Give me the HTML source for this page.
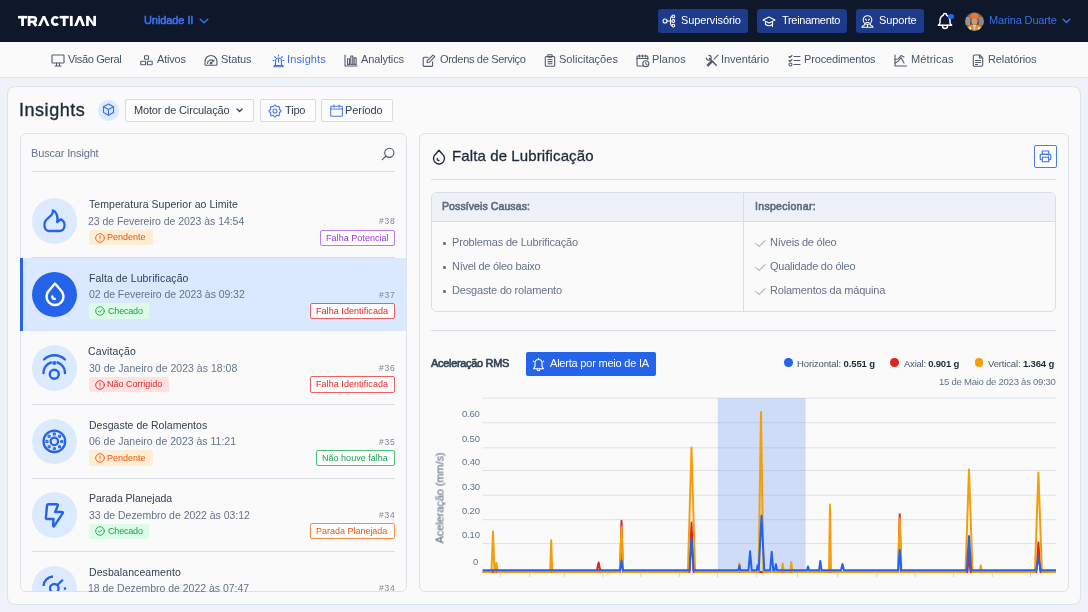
<!DOCTYPE html>
<html><head><meta charset="utf-8">
<style>
*{box-sizing:border-box;margin:0;padding:0}
html,body{width:1088px;height:612px;overflow:hidden;background:#eff3f9;font-family:"Liberation Sans",sans-serif;color:#334155;position:relative}
.a{position:absolute}
.t{position:absolute;white-space:nowrap;will-change:transform}
.t b{font-weight:bold;color:#1e293b}
svg{position:absolute;overflow:visible}

</style></head><body>
<div class="a" style="left:0px;top:0px;width:1088px;height:42px;background:#0f172a"></div>
<div class="a" style="left:0px;top:42px;width:1088px;height:36px;background:#fafafa;border-bottom:1px solid #e1e6ed"></div>
<div class="a" style="left:658px;top:9px;width:90px;height:24px;background:#1e3a8a;border-radius:3px"></div>
<div class="a" style="left:757px;top:9px;width:90px;height:24px;background:#1e3a8a;border-radius:3px"></div>
<div class="a" style="left:856px;top:9px;width:68px;height:24px;background:#1e3a8a;border-radius:3px"></div>
<div class="a" style="left:7px;top:86px;width:1074px;height:519px;background:#fafafa;border:1px solid #dde3ec;border-radius:8px"></div>
<div class="a" style="left:98px;top:100px;width:21px;height:21px;border-radius:50%;background:#dbeafe"></div>
<div class="a" style="left:125px;top:99px;width:129px;height:23px;border:1px solid #d5dce6;background:#fdfdfd;border-radius:2px"></div>
<div class="a" style="left:260px;top:99px;width:56px;height:23px;border:1px solid #d5dce6;background:#fdfdfd;border-radius:2px"></div>
<div class="a" style="left:321px;top:99px;width:72px;height:23px;border:1px solid #d5dce6;background:#fdfdfd;border-radius:2px"></div>
<div class="a" style="left:20px;top:133px;width:387px;height:459px;background:#fafafa;border:1px solid #dde3ec;border-radius:6px"></div>
<div class="a" style="left:32px;top:171px;width:363px;height:1px;background:#d8dee8"></div>
<div class="a" style="left:21px;top:258px;width:385px;height:73px;background:#dbe9fe"></div>
<div class="a" style="left:20px;top:258px;width:3px;height:73px;background:#2563eb"></div>
<div class="a" style="left:32px;top:257px;width:363px;height:1px;background:#d8dee8"></div>
<div class="a" style="left:32px;top:404px;width:363px;height:1px;background:#d8dee8"></div>
<div class="a" style="left:32px;top:477.5px;width:363px;height:1px;background:#d8dee8"></div>
<div class="a" style="left:32px;top:551px;width:363px;height:1px;background:#d8dee8"></div>
<div class="a" style="left:31.7px;top:198.4px;width:45.5px;height:45.5px;border-radius:50%;background:#dbeafe"></div>
<div class="a" style="left:89px;top:229.8px;width:64px;height:15.5px;border-radius:2px;background:#ffedd5"></div>
<div class="a" style="left:320px;top:229.5px;width:74.8px;height:16.2px;border-radius:2px;border:1px solid #b57cf5;background:#fff"></div>
<div class="a" style="left:31.7px;top:271.85px;width:45.5px;height:45.5px;border-radius:50%;background:#2563eb"></div>
<div class="a" style="left:89px;top:303.25px;width:60px;height:15.5px;border-radius:2px;background:#dcfce7"></div>
<div class="a" style="left:310.4px;top:302.95px;width:84.4px;height:16.2px;border-radius:2px;border:1px solid #ee6161;background:#fff"></div>
<div class="a" style="left:31.7px;top:345.3px;width:45.5px;height:45.5px;border-radius:50%;background:#dbeafe"></div>
<div class="a" style="left:89px;top:376.7px;width:80px;height:15.5px;border-radius:2px;background:#fee2e2"></div>
<div class="a" style="left:310.4px;top:376.4px;width:84.4px;height:16.2px;border-radius:2px;border:1px solid #ee6161;background:#fff"></div>
<div class="a" style="left:31.7px;top:418.75px;width:45.5px;height:45.5px;border-radius:50%;background:#dbeafe"></div>
<div class="a" style="left:89px;top:450.15px;width:64px;height:15.5px;border-radius:2px;background:#ffedd5"></div>
<div class="a" style="left:316.3px;top:449.85px;width:78.5px;height:16.2px;border-radius:2px;border:1px solid #4cc274;background:#fff"></div>
<div class="a" style="left:31.7px;top:492.2px;width:45.5px;height:45.5px;border-radius:50%;background:#dbeafe"></div>
<div class="a" style="left:89px;top:523.6px;width:60px;height:15.5px;border-radius:2px;background:#dcfce7"></div>
<div class="a" style="left:310.4px;top:523.3px;width:84.4px;height:16.2px;border-radius:2px;border:1px solid #f58c4a;background:#fff"></div>
<div class="a" style="left:20px;top:560px;width:387px;height:31px;overflow:hidden"><div class="a" style="left:11.7px;top:5.65px;width:45.5px;height:45.5px;border-radius:50%;background:#dbeafe"></div></div>
<div class="a" style="left:419px;top:133px;width:650px;height:459px;background:#fafafa;border:1px solid #dde3ec;border-radius:6px"></div>
<div class="a" style="left:1033.5px;top:145px;width:23px;height:23px;border:1px solid #4a7cec;border-radius:2px;background:#fff"></div>
<div class="a" style="left:431px;top:179px;width:625px;height:1px;background:#d8dee8"></div>
<div class="a" style="left:431px;top:192px;width:625px;height:120px;border:1px solid #d8dee8;border-radius:6px;overflow:hidden"><div class="a" style="left:0;top:0;width:623px;height:29px;background:#eef2f8;border-bottom:1px solid #d8dee8"></div><div class="a" style="left:311px;top:0;width:1px;height:120px;background:#d8dee8"></div></div>
<div class="a" style="left:431px;top:329.5px;width:625px;height:1px;background:#d8dee8"></div>
<div class="a" style="left:526px;top:351.5px;width:130px;height:24px;background:#2563eb;border-radius:2px"></div>
<div class="a" style="left:784px;top:358.2px;width:8.6px;height:8.6px;border-radius:50%;background:#2563eb"></div>
<div class="a" style="left:890.3px;top:358.2px;width:8.6px;height:8.6px;border-radius:50%;background:#dc2626"></div>
<div class="a" style="left:974.7px;top:358.2px;width:8.6px;height:8.6px;border-radius:50%;background:#f59e0b"></div><svg class="chart" width="1088" height="612" style="left:0;top:0" viewBox="0 0 1088 612">
<rect x="717.8" y="398.2" width="87.8" height="173" fill="#cfdcf7"/>
<line x1="482.6" y1="398.2" x2="1056" y2="398.2" stroke="#94a3b8" stroke-opacity="0.28" stroke-width="1"/>
<line x1="482.6" y1="422.7" x2="1056" y2="422.7" stroke="#94a3b8" stroke-opacity="0.28" stroke-width="1"/>
<line x1="482.6" y1="447.8" x2="1056" y2="447.8" stroke="#94a3b8" stroke-opacity="0.28" stroke-width="1"/>
<line x1="482.6" y1="470.5" x2="1056" y2="470.5" stroke="#94a3b8" stroke-opacity="0.28" stroke-width="1"/>
<line x1="482.6" y1="495.2" x2="1056" y2="495.2" stroke="#94a3b8" stroke-opacity="0.28" stroke-width="1"/>
<line x1="482.6" y1="519.7" x2="1056" y2="519.7" stroke="#94a3b8" stroke-opacity="0.28" stroke-width="1"/>
<line x1="482.6" y1="543.6" x2="1056" y2="543.6" stroke="#94a3b8" stroke-opacity="0.28" stroke-width="1"/>
<line x1="500.3" y1="571.5" x2="500.3" y2="577" stroke="#cbd5e1" stroke-width="1"/>
<line x1="529.7" y1="571.5" x2="529.7" y2="577" stroke="#cbd5e1" stroke-width="1"/>
<line x1="564.3" y1="571.5" x2="564.3" y2="577" stroke="#cbd5e1" stroke-width="1"/>
<line x1="602.9" y1="571.5" x2="602.9" y2="577" stroke="#cbd5e1" stroke-width="1"/>
<line x1="641" y1="571.5" x2="641" y2="577" stroke="#cbd5e1" stroke-width="1"/>
<line x1="679.3" y1="571.5" x2="679.3" y2="577" stroke="#cbd5e1" stroke-width="1"/>
<line x1="717.4" y1="571.5" x2="717.4" y2="577" stroke="#cbd5e1" stroke-width="1"/>
<line x1="757" y1="571.5" x2="757" y2="577" stroke="#cbd5e1" stroke-width="1"/>
<line x1="797.5" y1="571.5" x2="797.5" y2="577" stroke="#cbd5e1" stroke-width="1"/>
<line x1="837.6" y1="571.5" x2="837.6" y2="577" stroke="#cbd5e1" stroke-width="1"/>
<line x1="876.8" y1="571.5" x2="876.8" y2="577" stroke="#cbd5e1" stroke-width="1"/>
<line x1="915" y1="571.5" x2="915" y2="577" stroke="#cbd5e1" stroke-width="1"/>
<line x1="953.3" y1="571.5" x2="953.3" y2="577" stroke="#cbd5e1" stroke-width="1"/>
<line x1="992.3" y1="571.5" x2="992.3" y2="577" stroke="#cbd5e1" stroke-width="1"/>
<line x1="1030.5" y1="571.5" x2="1030.5" y2="577" stroke="#cbd5e1" stroke-width="1"/>
<path d="M482.6 572.0 L596.6 572.0 L598.6 562.5 L600.6 572.0 L620.1 572.0 L621.5 520.7 L622.9 572.0 L689.5 572.0 L691.5 522.6 L693.5 572.0 L898.3 572.0 L899.7 514.2 L901.1 572.0 L967.5 572.0 L969.0 553.0 L970.5 572.0 L1036.4 572.0 L1038.4 542.6 L1040.4 572.0 L1056.0 572.0" fill="none" stroke="#dc2626" stroke-width="2" stroke-linejoin="round"/>
<path d="M482.6 572.0 L491.5 572.0 L493.0 531.5 L494.5 572.0 L495.3 572.0 L496.5 563.0 L497.7 572.0 L550.2 572.0 L551.2 540.3 L552.2 572.0 L619.7 572.0 L621.5 527.0 L623.3 572.0 L687.9 572.0 L691.5 447.6 L695.1 572.0 L738.4 572.0 L739.4 563.6 L740.4 572.0 L758.6 572.0 L761.0 411.9 L763.4 572.0 L781.7 572.0 L782.7 563.6 L783.7 572.0 L790.3 572.0 L791.3 562.0 L792.3 572.0 L829.0 572.0 L830.0 504.4 L831.0 572.0 L897.9 572.0 L899.7 518.4 L901.5 572.0 L965.5 572.0 L969.0 469.4 L972.5 572.0 L980.0 572.0 L980.8 565.5 L981.6 572.0 L1034.9 572.0 L1038.4 472.4 L1041.9 572.0 L1056.0 572.0" fill="none" stroke="#f59e0b" stroke-width="2" stroke-linejoin="round"/>
<path d="M482.6 570.3 L620.0 570.3 L621.5 560.6 L623.0 570.3 L689.6 570.3 L691.6 537.4 L693.6 570.3 L738.4 570.3 L739.4 565.5 L740.4 570.3 L748.5 570.3 L750.1 551.3 L751.7 570.3 L756.7 570.3 L757.7 565.3 L758.7 570.3 L758.7 570.3 L761.5 515.8 L764.3 570.3 L770.1 570.3 L771.7 551.8 L773.3 570.3 L774.7 570.3 L775.9 564.3 L777.1 570.3 L807.0 570.3 L808.0 566.5 L809.0 570.3 L819.1 570.3 L820.3 561.0 L821.5 570.3 L841.0 570.3 L842.5 564.0 L844.0 570.3 L898.2 570.3 L899.7 550.0 L901.2 570.3 L966.8 570.3 L969.0 536.0 L971.2 570.3 L1036.2 570.3 L1038.4 557.3 L1040.6 570.3 L1056.0 570.3" fill="none" stroke="#2563eb" stroke-width="2" stroke-linejoin="round"/>
</svg><svg style="left:0;top:0" width="100" height="40" viewBox="0 0 100 40"><g fill="#fff"><rect x="18" y="15.9" width="9.1" height="2.6"/><rect x="21.15" y="15.9" width="2.8" height="10.1"/><rect x="27.7" y="15.9" width="2.8" height="10.1"/><path d="M38 26 L42.6 15.9 H45.1 L49.6 26 H46.8 L43.85 19.3 L40.9 26 Z"/><rect x="59.6" y="15.9" width="9.2" height="2.6"/><rect x="62.8" y="15.9" width="2.8" height="10.1"/><rect x="69.9" y="15.9" width="2.8" height="10.1"/><path d="M74.1 26 L78.3 15.9 H81.2 L85.1 26 H82.2 L79.75 19.6 L77 26 Z"/><rect x="86.1" y="15.9" width="2.7" height="10.1"/><rect x="93.3" y="15.9" width="2.7" height="10.1"/><path d="M86.1 15.9 H88.9 L96 26 H93.2 Z"/></g><g fill="none" stroke="#fff"><path d="M29 17.2 H33.6 A2.3 2.3 0 0 1 33.6 21.8 H29" stroke-width="2.6"/><path d="M33.2 21.6 L36.2 26" stroke-width="2.9"/><path d="M57.9 18.4 A3.35 3.7 0 1 0 57.9 23.5" stroke-width="2.7"/></g></svg>
<svg style="left:198.5px;top:18px" width="10" height="6" viewBox="0 0 10 6" fill="none" stroke="#3b70e8" stroke-width="1.5" stroke-linecap="round" stroke-linejoin="round"><path d="M1.2 1.2l3.8 3.6l3.8 -3.6"/></svg>
<svg style="left:1062px;top:18px" width="9" height="6" viewBox="0 0 9 6" fill="none" stroke="#3b70e8" stroke-width="1.4" stroke-linecap="round" stroke-linejoin="round"><path d="M1.2 1.2l3.3 3.3l3.3 -3.3"/></svg>
<svg style="left:662px;top:14px" width="14" height="14" viewBox="0 0 14 14" fill="none" stroke="#ffffff" stroke-width="1.1" stroke-linecap="round" stroke-linejoin="round"><circle cx="3" cy="7" r="2"/><path d="M5 7h4"/><path d="M10 2.5q-1.5 0 -1.5 2v5q0 2 1.5 2"/><circle cx="11.3" cy="2.4" r="1.4"/><circle cx="11.3" cy="7" r="1.4"/><circle cx="11.3" cy="11.6" r="1.4"/></svg>
<svg style="left:762px;top:14.5px" width="14" height="13" viewBox="0 0 14 13" fill="none" stroke="#ffffff" stroke-width="1.1" stroke-linecap="round" stroke-linejoin="round"><path d="M7 2l6 3l-6 3l-6 -3z"/><path d="M3.5 6.5v3q3.5 2.5 7 0v-3"/><path d="M10.5 6.5v5"/></svg>
<svg style="left:861px;top:14.5px" width="13" height="13" viewBox="0 0 13 13" fill="none" stroke="#ffffff" stroke-width="1.1" stroke-linecap="round" stroke-linejoin="round"><circle cx="6.5" cy="5" r="4.3"/><path d="M4.5 4.2l1 1m3 -1l-1 1"/><path d="M5 7.5h3"/><path d="M4 9.2l-1 1.3q-2 .5 -2 1.7h11q0 -1.2 -2 -1.7l-1 -1.3"/><path d="M6.5 9.5v2.5"/></svg>
<svg style="left:934.5px;top:11px" width="20" height="20" viewBox="0 0 24 24" fill="none" stroke="#ffffff" stroke-width="1.7" stroke-linecap="round" stroke-linejoin="round"><path d="M10 5a2 2 0 1 1 4 0a7 7 0 0 1 4 6v3a4 4 0 0 0 2 3h-16a4 4 0 0 0 2 -3v-3a7 7 0 0 1 4 -6"/><path d="M9 17v1a3 3 0 0 0 6 0v-1"/></svg>
<div class="a" style="left:948.4px;top:13.7px;width:5.2px;height:5.2px;border-radius:50%;background:#2563eb"></div>
<svg style="left:965px;top:11.5px" width="19" height="19" viewBox="0 0 19 19"><defs><clipPath id="avc"><circle cx="9.5" cy="9.5" r="9.3"/></clipPath></defs><g clip-path="url(#avc)">
<rect width="19" height="19" fill="#6f6a62"/><rect x="0" y="5" width="5" height="8" fill="#9a958c"/><rect x="14" y="5" width="5" height="8" fill="#8d8a84"/>
<path d="M5 6q0 -5 4.5 -5q4.5 0 4.5 5z" fill="#f0782a"/><rect x="4" y="5.2" width="11" height="1.4" fill="#e8691f"/>
<ellipse cx="9.5" cy="9.3" rx="3" ry="3.4" fill="#c79a7c"/><path d="M6 8q-1.5 3 -0.5 6l1.5 -1z" fill="#6a4a35"/><path d="M13 8q1.5 3 0.5 6l-1.5 -1z" fill="#6a4a35"/>
<path d="M2 19l1 -5q3 -2 6.5 -1q3.5 -1 6.5 1l1 5z" fill="#f08a1c"/><path d="M8 13l1.5 6l1.5 -6z" fill="#c9cdd2"/><rect x="4" y="15" width="2" height="4" fill="#d9dde0"/><rect x="13" y="15" width="2" height="4" fill="#d9dde0"/>
</g></svg>
<svg style="left:50.5px;top:53.5px" width="14" height="13" viewBox="0 0 14 13" fill="none" stroke="#505c6e" stroke-width="1.1" stroke-linecap="round" stroke-linejoin="round"><rect x="1" y="1" width="12" height="8" rx="0.8"/><path d="M4 12h6M5.5 9v3M8.5 9v3"/></svg>
<svg style="left:139.5px;top:55px" width="13" height="10.5" viewBox="0 0 13 10.5" fill="none" stroke="#505c6e" stroke-width="1.1" stroke-linecap="round" stroke-linejoin="round"><rect x="4.5" y="0.8" width="4" height="3.5" rx="0.6"/><rect x="0.8" y="6.3" width="4.8" height="3.5" rx="0.6"/><rect x="7.4" y="6.3" width="4.8" height="3.5" rx="0.6"/></svg>
<svg style="left:204px;top:55px" width="14" height="11" viewBox="0 0 14 11" fill="none" stroke="#505c6e" stroke-width="1.1" stroke-linecap="round" stroke-linejoin="round"><path d="M1 9.5v-3a6 6 0 0 1 12 0v3q0 0.8 -0.8 0.8h-10.4q-0.8 0 -0.8 -0.8z"/><path d="M3.5 8.5a3.5 3.5 0 0 1 6 -2.5"/><circle cx="7" cy="8.2" r="0.8" fill="#505c6e"/><path d="M7 8.2l3.3 -3"/></svg>
<svg style="left:271.5px;top:53.5px" width="13" height="13" viewBox="0 0 13 13" fill="none" stroke="#3b70e8" stroke-width="1.1" stroke-linecap="round" stroke-linejoin="round"><path d="M3.5 11.5v-4.5a3 3 0 0 1 6 0v4.5"/><path d="M2 11.5h9v1.2h-9z"/><path d="M6.5 1v1M1 6.5h1M11 6.5h1M2.7 2.7l.8 .8M10.3 2.7l-.8 .8"/><path d="M6.5 5.5v2.5"/></svg>
<svg style="left:343.5px;top:53.5px" width="14" height="13" viewBox="0 0 14 13" fill="none" stroke="#505c6e" stroke-width="1.1" stroke-linecap="round" stroke-linejoin="round"><path d="M1 1v11h12"/><rect x="3.5" y="4.8" width="2" height="5.6"/><rect x="6.8" y="2" width="2" height="8.4"/><rect x="10.1" y="3.8" width="2" height="6.6"/></svg>
<svg style="left:422px;top:53.5px" width="14" height="13" viewBox="0 0 14 13" fill="none" stroke="#505c6e" stroke-width="1.1" stroke-linecap="round" stroke-linejoin="round"><path d="M6 3.2h-3.6a1.2 1.2 0 0 0 -1.2 1.2v6.8a1.2 1.2 0 0 0 1.2 1.2h7a1.2 1.2 0 0 0 1.2 -1.2v-3.4"/><path d="M5 8.5l0.4 -2l5.6 -5.4l1.8 1.6l-5.6 5.6z"/></svg>
<svg style="left:544px;top:53.5px" width="12" height="13" viewBox="0 0 12 13" fill="none" stroke="#505c6e" stroke-width="1.1" stroke-linecap="round" stroke-linejoin="round"><rect x="1.3" y="2.5" width="9.4" height="9.8" rx="1"/><rect x="3.8" y="0.8" width="4.4" height="2.5" rx="0.6"/><path d="M4 5.5h4M4 7.6h4M4 9.7h4"/></svg>
<svg style="left:636px;top:53.5px" width="14" height="14" viewBox="0 0 14 14" fill="none" stroke="#505c6e" stroke-width="1.1" stroke-linecap="round" stroke-linejoin="round"><path d="M7 12h-5.2a0.8 0.8 0 0 1 -0.8 -0.8v-8.4a0.8 0.8 0 0 1 0.8 -0.8h9.2a0.8 0.8 0 0 1 0.8 .8v2.8"/><path d="M1 4.5h11"/><path d="M3.5 1v2M6.5 1v2M9.5 1v2"/><circle cx="9.8" cy="9.8" r="3"/><path d="M9.8 8.5v1.3l1 .8"/></svg>
<svg style="left:704.5px;top:53.5px" width="14" height="13" viewBox="0 0 14 13" fill="none" stroke="#505c6e" stroke-width="1.1" stroke-linecap="round" stroke-linejoin="round"><path d="M1.4 3.9 A2.4 2.4 0 1 0 3.9 1.4"/><path d="M4.6 4.6 L11.3 11.3" stroke-width="1.5"/><path d="M13 1.2 L9 5.2"/><path d="M7.3 6.9 L2.3 11.9" stroke-width="2.6" stroke-linecap="butt"/></svg>
<svg style="left:787.5px;top:53.5px" width="13" height="13" viewBox="0 0 13 13" fill="none" stroke="#505c6e" stroke-width="1.1" stroke-linecap="round" stroke-linejoin="round"><path d="M1 2.5l1 1l2 -2M1 6.5l1 1l2 -2"/><circle cx="2.5" cy="10.5" r="1.5"/><path d="M6 2.5h6M6 6.5h6M6 10.5h6"/></svg>
<svg style="left:894px;top:53.5px" width="13" height="13" viewBox="0 0 13 13" fill="none" stroke="#505c6e" stroke-width="1.1" stroke-linecap="round" stroke-linejoin="round"><path d="M1 1v11h11.5"/><path d="M1 9l3 -1.5l3 -4l3 5.5"/><path d="M1 5.5l3 -0.5l3 -3.5l3 1.5"/></svg>
<svg style="left:971.5px;top:53.5px" width="12" height="13" viewBox="0 0 12 13" fill="none" stroke="#505c6e" stroke-width="1.1" stroke-linecap="round" stroke-linejoin="round"><path d="M7.5 1v3h3"/><path d="M9.5 12.2h-7a1.2 1.2 0 0 1 -1.2 -1.2v-8.8a1.2 1.2 0 0 1 1.2 -1.2h5.2l3 3v7a1.2 1.2 0 0 1 -1.2 1.2z"/><path d="M3.5 6.5h5M3.5 8.5h5M3.5 10.5h2"/></svg>
<svg style="left:102px;top:103px" width="13" height="13" viewBox="0 0 13 13" fill="none" stroke="#3b70e8" stroke-width="1.1" stroke-linecap="round" stroke-linejoin="round"><path d="M6.5 1l5 2.8v5.6l-5 2.8l-5 -2.8v-5.6z"/><path d="M1.5 3.8l5 2.8l5 -2.8M6.5 6.6v5.6"/></svg>
<svg style="left:235.5px;top:107.8px" width="7.5" height="5" viewBox="0 0 7.5 5" fill="none" stroke="#334155" stroke-width="1.2" stroke-linecap="round" stroke-linejoin="round"><path d="M1 1l2.6 2.5l2.6 -2.5"/></svg>
<svg style="left:267.4px;top:102.85px" width="16" height="16" viewBox="0 0 24 24" fill="none" stroke="#4a7cec" stroke-width="1.7" stroke-linecap="round" stroke-linejoin="round"><path d="M10.325 4.317c.426 -1.756 2.924 -1.756 3.35 0a1.724 1.724 0 0 0 2.573 1.066c1.543 -.94 3.31 .826 2.37 2.37a1.724 1.724 0 0 0 1.065 2.572c1.756 .426 1.756 2.924 0 3.35a1.724 1.724 0 0 0 -1.066 2.573c.94 1.543 -.826 3.31 -2.37 2.37a1.724 1.724 0 0 0 -2.572 1.065c-.426 1.756 -2.924 1.756 -3.35 0a1.724 1.724 0 0 0 -2.573 -1.066c-1.543 .94 -3.31 -.826 -2.37 -2.37a1.724 1.724 0 0 0 -1.065 -2.572c-1.756 -.426 -1.756 -2.924 0 -3.35a1.724 1.724 0 0 0 1.066 -2.573c-.94 -1.543 .826 -3.31 2.37 -2.37c1 .608 2.296 .07 2.572 -1.065z"/><path d="M9 12a3 3 0 1 0 6 0a3 3 0 0 0 -6 0"/></svg>
<svg style="left:326px;top:100px" width="20" height="20" viewBox="0 0 20 20" fill="none" stroke="#4a7cec" stroke-width="1.1" stroke-linecap="round" stroke-linejoin="round"><rect x="4.7" y="6.3" width="11.7" height="9.9" rx="1"/><path d="M4.7 9h11.7M8 5v2.2M13.1 5v2.2"/></svg>
<svg style="left:381px;top:147px" width="15" height="14" viewBox="0 0 15 14" fill="none" stroke="#475569" stroke-width="1.1" stroke-linecap="round" stroke-linejoin="round"><circle cx="8.3" cy="5.8" r="4.6"/><path d="M1.3 12.6l3.8 -3.6"/></svg>
<svg style="left:40px;top:206px" width="30" height="30" viewBox="40 206 30 30" fill="none" stroke="#2563eb" stroke-width="2.3" stroke-linecap="round" stroke-linejoin="round"><path d="M52.8 210.3 C54 214 50 216.5 47.8 218.3 C44.8 220.8 44 224 44.6 226.8 C45.2 229.5 46.8 231 49 231 H59.5 C62 231 63.8 229.5 64.4 226.8 C65 224 63.8 221 61 219.3 L57.2 222 C58 218.5 57.5 215.5 56 213 C55 211.3 53.8 210.5 52.8 210.3 Z"/></svg>
<svg style="left:43px;top:281px" width="24" height="27" viewBox="0 0 24 27" fill="none" stroke="#ffffff" stroke-width="2.4" stroke-linecap="round" stroke-linejoin="round"><path d="M12 2.5l-5.5 6.5a8.5 8.5 0 1 0 11 0z"/><path d="M9.3 15.5a2.5 2.5 0 0 0 2.5 2.5"/></svg>
<svg style="left:42px;top:355px" width="25" height="26" viewBox="0 0 25 26" fill="none" stroke="#2563eb" stroke-width="2.4" stroke-linecap="round" stroke-linejoin="round"><path d="M2 4.5a15 15 0 0 1 21 0"/><path d="M1.5 18a11 11 0 0 1 7.5 -10.5M23 18a11 11 0 0 0 -7.5 -10.5"/><circle cx="12.3" cy="8" r="0.8" fill="#2563eb"/><circle cx="12.3" cy="19.3" r="4.5"/></svg>
<svg style="left:42px;top:429px" width="25" height="25" viewBox="0 0 25 25" fill="none" stroke="#2563eb" stroke-width="2.3" stroke-linecap="round" stroke-linejoin="round"><circle cx="12.35" cy="12.4" r="10.8"/><circle cx="12.35" cy="12.4" r="3.7"/><circle cx="19.75" cy="12.40" r="0.6" fill="#2563eb"/><circle cx="17.58" cy="17.63" r="0.6" fill="#2563eb"/><circle cx="12.35" cy="19.80" r="0.6" fill="#2563eb"/><circle cx="7.12" cy="17.63" r="0.6" fill="#2563eb"/><circle cx="4.95" cy="12.40" r="0.6" fill="#2563eb"/><circle cx="7.12" cy="7.17" r="0.6" fill="#2563eb"/><circle cx="12.35" cy="5.00" r="0.6" fill="#2563eb"/><circle cx="17.58" cy="7.17" r="0.6" fill="#2563eb"/></svg>
<svg style="left:44px;top:501.5px" width="21" height="27" viewBox="0 0 21 27" fill="none" stroke="#2563eb" stroke-width="2.4" stroke-linecap="round" stroke-linejoin="round"><path d="M4.2 2.3h8.6q1.4 0 1 1.3l-2.6 6.4h6.6q1.6 0 .8 1.3l-8.3 12.6q-1 1.2 -1.2 -.3l.4 -6.6h-6.3q-1.5 0 -1.3 -1.5l1.2 -12.3q.2 -.9 1.1 -.9z"/></svg>
<div class="a" style="left:20px;top:575px;width:387px;height:16px;overflow:hidden"><svg style="left:22px;top:-1px" width="26" height="20" viewBox="0 0 26 20" fill="none" stroke="#2563eb" stroke-width="2.3" stroke-linecap="butt"><path d="M1.5 12a10 10 0 0 1 9.5 -9.5"/><circle cx="12.3" cy="14.3" r="4.3"/><path d="M15.2 11.3l5.6 -5.6"/><path d="M23 13.3v2.5"/></svg></div>
<svg style="left:94.5px;top:232.6px" width="10" height="10" viewBox="0 0 10 10" fill="none" stroke="#ea580c" stroke-width="0.9" stroke-linecap="round"><circle cx="5" cy="5" r="4.3"/><path d="M5 2.8v2.6M5 7.1v.1"/></svg>
<svg style="left:94.5px;top:306.05px" width="10" height="10" viewBox="0 0 10 10" fill="none" stroke="#16a34a" stroke-width="0.9" stroke-linecap="round" stroke-linejoin="round"><circle cx="5" cy="5" r="4.3"/><path d="M3.2 5l1.3 1.3l2.4 -2.5"/></svg>
<svg style="left:94.5px;top:379.5px" width="10" height="10" viewBox="0 0 10 10" fill="none" stroke="#dc2626" stroke-width="0.9" stroke-linecap="round"><circle cx="5" cy="5" r="4.3"/><path d="M5 2.8v2.6M5 7.1v.1"/></svg>
<svg style="left:94.5px;top:452.95px" width="10" height="10" viewBox="0 0 10 10" fill="none" stroke="#ea580c" stroke-width="0.9" stroke-linecap="round"><circle cx="5" cy="5" r="4.3"/><path d="M5 2.8v2.6M5 7.1v.1"/></svg>
<svg style="left:94.5px;top:526.4px" width="10" height="10" viewBox="0 0 10 10" fill="none" stroke="#16a34a" stroke-width="0.9" stroke-linecap="round" stroke-linejoin="round"><circle cx="5" cy="5" r="4.3"/><path d="M3.2 5l1.3 1.3l2.4 -2.5"/></svg>
<svg style="left:431.5px;top:148.5px" width="14" height="16" viewBox="0 0 14 16" fill="none" stroke="#1e293b" stroke-width="1.4" stroke-linecap="round" stroke-linejoin="round"><path d="M7 1.2l-3.5 4a5.5 5.5 0 1 0 7 0z"/><path d="M5.2 9.8a1.7 1.7 0 0 0 1.7 1.7"/></svg>
<svg style="left:1038.5px;top:150px" width="13" height="13" viewBox="0 0 13 13" fill="none" stroke="#3b70e8" stroke-width="1.1" stroke-linecap="round" stroke-linejoin="round"><path d="M3.2 9.8h-1a1 1 0 0 1 -1 -1v-3.6a1 1 0 0 1 1 -1h8.6a1 1 0 0 1 1 1v3.6a1 1 0 0 1 -1 1h-1"/><rect x="3.3" y="1" width="6.4" height="3.2"/><rect x="3.3" y="7.3" width="6.4" height="4.4"/><path d="M9.3 5.9h.3"/></svg>
<div class="a" style="left:443px;top:242.2px;width:2.6px;height:2.6px;border-radius:50%;background:#64748b"></div>
<svg style="left:754.5px;top:238.5px" width="11" height="9" viewBox="0 0 11 9" fill="none" stroke="#8591a3" stroke-width="1" stroke-linecap="round" stroke-linejoin="round"><path d="M1 4.5l3 3l6 -6"/></svg>
<div class="a" style="left:443px;top:266.2px;width:2.6px;height:2.6px;border-radius:50%;background:#64748b"></div>
<svg style="left:754.5px;top:262.5px" width="11" height="9" viewBox="0 0 11 9" fill="none" stroke="#8591a3" stroke-width="1" stroke-linecap="round" stroke-linejoin="round"><path d="M1 4.5l3 3l6 -6"/></svg>
<div class="a" style="left:443px;top:290.2px;width:2.6px;height:2.6px;border-radius:50%;background:#64748b"></div>
<svg style="left:754.5px;top:286.5px" width="11" height="9" viewBox="0 0 11 9" fill="none" stroke="#8591a3" stroke-width="1" stroke-linecap="round" stroke-linejoin="round"><path d="M1 4.5l3 3l6 -6"/></svg>
<svg style="left:531.5px;top:356.5px" width="13" height="14" viewBox="0 0 13 14" fill="none" stroke="#ffffff" stroke-width="1.1" stroke-linecap="round" stroke-linejoin="round"><path d="M6.5 1.2v.6"/><path d="M3 6a3.5 3.5 0 0 1 7 0v3.5l1.5 2.3h-10l1.5 -2.3z"/><path d="M5 12.3a1.5 1.5 0 0 0 3 0"/><path d="M1.2 4l.8 .6M11.8 4l-.8 .6"/></svg>
<div class="t" style="left:440.2px;top:498.1px;font-size:11px;line-height:11px;color:#56637a;transform:translate(-50%,-50%) rotate(-90deg);letter-spacing:-0.08px">Aceleração (mm/s)</div>
<div class="t" id="unid" style="left:144.14px;top:14.54px;font-size:11px;line-height:11px;color:#3b70e8;letter-spacing:-0.081px;-webkit-text-stroke:0.6px #3b70e8">Unidade II</div>
<div class="t" id="sup" style="left:680.87px;top:14.54px;font-size:11px;line-height:11px;color:#ffffff;letter-spacing:-0.105px">Supervisório</div>
<div class="t" id="tre" style="left:781.50px;top:14.54px;font-size:11px;line-height:11px;color:#ffffff;letter-spacing:-0.300px">Treinamento</div>
<div class="t" id="spt" style="left:879.37px;top:14.54px;font-size:11px;line-height:11px;color:#ffffff;letter-spacing:-0.134px">Suporte</div>
<div class="t" id="mar" style="left:989.32px;top:14.64px;font-size:11px;line-height:11px;color:#3b70e8;letter-spacing:-0.154px">Marina Duarte</div>
<div class="t" id="nav0" style="left:68.20px;top:53.69px;font-size:11px;line-height:11px;color:#475569;letter-spacing:-0.365px">Visão Geral</div>
<div class="t" id="nav1" style="left:157.20px;top:53.69px;font-size:11px;line-height:11px;color:#475569;letter-spacing:-0.203px">Ativos</div>
<div class="t" id="nav2" style="left:220.54px;top:53.69px;font-size:11px;line-height:11px;color:#475569;letter-spacing:-0.115px">Status</div>
<div class="t" id="nav3" style="left:287.20px;top:53.69px;font-size:11px;line-height:11px;color:#3b70e8;letter-spacing:0.127px">Insights</div>
<div class="t" id="nav4" style="left:361.40px;top:53.69px;font-size:11px;line-height:11px;color:#475569;letter-spacing:-0.125px">Analytics</div>
<div class="t" id="nav5" style="left:439.87px;top:53.69px;font-size:11px;line-height:11px;color:#475569;letter-spacing:-0.326px">Ordens de Serviço</div>
<div class="t" id="nav6" style="left:559.44px;top:53.69px;font-size:11px;line-height:11px;color:#475569;letter-spacing:0.017px">Solicitações</div>
<div class="t" id="nav7" style="left:651.92px;top:53.69px;font-size:11px;line-height:11px;color:#475569;letter-spacing:0.016px">Planos</div>
<div class="t" id="nav8" style="left:721.20px;top:53.69px;font-size:11px;line-height:11px;color:#475569;letter-spacing:-0.032px">Inventário</div>
<div class="t" id="nav9" style="left:803.92px;top:53.69px;font-size:11px;line-height:11px;color:#475569;letter-spacing:-0.147px">Procedimentos</div>
<div class="t" id="nav10" style="left:910.72px;top:53.69px;font-size:11px;line-height:11px;color:#475569;letter-spacing:0.127px">Métricas</div>
<div class="t" id="nav11" style="left:987.82px;top:53.69px;font-size:11px;line-height:11px;color:#475569;letter-spacing:-0.110px">Relatórios</div>
<div class="t" id="ins" style="left:19.42px;top:100.56px;font-size:18px;line-height:18px;color:#1e293b;letter-spacing:0.535px;-webkit-text-stroke:0.35px #1e293b">Insights</div>
<div class="t" id="motor" style="left:133.82px;top:104.69px;font-size:11px;line-height:11px;color:#334155;letter-spacing:-0.154px">Motor de Circulação</div>
<div class="t" id="tipo" style="left:284.50px;top:104.69px;font-size:11px;line-height:11px;color:#334155;letter-spacing:-0.179px">Tipo</div>
<div class="t" id="per" style="left:344.62px;top:104.69px;font-size:11px;line-height:11px;color:#334155;letter-spacing:-0.149px">Período</div>
<div class="t" id="busc" style="left:31.22px;top:147.59px;font-size:11px;line-height:11px;color:#64748b;letter-spacing:-0.157px">Buscar Insight</div>
<div class="t" id="r0t" style="left:88.50px;top:198.66px;font-size:10.5px;line-height:10.5px;color:#334155;letter-spacing:0.057px">Temperatura Superior ao Limite</div>
<div class="t" id="r0d" style="left:88.02px;top:215.66px;font-size:10.5px;line-height:10.5px;color:#64748b;letter-spacing:-0.044px">23 de Fevereiro de 2023 às 14:54</div>
<div class="t" id="r0n" style="left:378.50px;top:216.50px;font-size:8.5px;line-height:8.5px;color:#7a8699;letter-spacing:0.752px">#38</div>
<div class="t" id="r0s" style="left:107.00px;top:232.53px;font-size:9px;line-height:9px;color:#ea580c;letter-spacing:-0.020px">Pendente</div>
<div class="t" id="r0g" style="left:326.08px;top:233.73px;font-size:9px;line-height:9px;color:#9333ea;letter-spacing:0.041px">Falha Potencial</div>
<div class="t" id="r1t" style="left:88.62px;top:272.61px;font-size:10.5px;line-height:10.5px;color:#334155;letter-spacing:0.099px">Falta de Lubrificação</div>
<div class="t" id="r1d" style="left:88.50px;top:288.61px;font-size:10.5px;line-height:10.5px;color:#64748b;letter-spacing:-0.061px">02 de Fevereiro de 2023 às 09:32</div>
<div class="t" id="r1n" style="left:378.50px;top:290.70px;font-size:8.5px;line-height:8.5px;color:#7a8699;letter-spacing:0.741px">#37</div>
<div class="t" id="r1s" style="left:107.60px;top:306.73px;font-size:9px;line-height:9px;color:#16a34a;letter-spacing:-0.189px">Checado</div>
<div class="t" id="r1g" style="left:315.60px;top:306.68px;font-size:9px;line-height:9px;color:#dc2626;letter-spacing:0.059px">Falha Identificada</div>
<div class="t" id="r2t" style="left:88.00px;top:345.56px;font-size:10.5px;line-height:10.5px;color:#334155;letter-spacing:0.135px">Cavitação</div>
<div class="t" id="r2d" style="left:88.65px;top:362.56px;font-size:10.5px;line-height:10.5px;color:#64748b;letter-spacing:0.020px">30 de Janeiro de 2023 às 18:08</div>
<div class="t" id="r2n" style="left:378.50px;top:363.65px;font-size:8.5px;line-height:8.5px;color:#7a8699;letter-spacing:0.752px">#36</div>
<div class="t" id="r2s" style="left:106.92px;top:379.68px;font-size:9px;line-height:9px;color:#dc2626;letter-spacing:-0.025px">Não Corrigido</div>
<div class="t" id="r2g" style="left:315.60px;top:379.63px;font-size:9px;line-height:9px;color:#dc2626;letter-spacing:0.059px">Falha Identificada</div>
<div class="t" id="r3t" style="left:88.62px;top:419.51px;font-size:10.5px;line-height:10.5px;color:#334155;letter-spacing:0.012px">Desgaste de Rolamentos</div>
<div class="t" id="r3d" style="left:88.50px;top:435.51px;font-size:10.5px;line-height:10.5px;color:#64748b;letter-spacing:0.004px">06 de Janeiro de 2023 às 11:21</div>
<div class="t" id="r3n" style="left:378.50px;top:437.60px;font-size:8.5px;line-height:8.5px;color:#7a8699;letter-spacing:0.774px">#35</div>
<div class="t" id="r3s" style="left:107.00px;top:453.63px;font-size:9px;line-height:9px;color:#ea580c;letter-spacing:-0.020px">Pendente</div>
<div class="t" id="r3g" style="left:322.18px;top:453.58px;font-size:9px;line-height:9px;color:#16a34a;letter-spacing:0.021px">Não houve falha</div>
<div class="t" id="r4t" style="left:88.62px;top:492.71px;font-size:10.5px;line-height:10.5px;color:#334155;letter-spacing:-0.022px">Parada Planejada</div>
<div class="t" id="r4d" style="left:88.62px;top:509.71px;font-size:10.5px;line-height:10.5px;color:#64748b;letter-spacing:-0.028px">33 de Dezembro de 2022 às 03:12</div>
<div class="t" id="r4n" style="left:378.50px;top:510.55px;font-size:8.5px;line-height:8.5px;color:#7a8699;letter-spacing:0.714px">#34</div>
<div class="t" id="r4s" style="left:107.60px;top:526.58px;font-size:9px;line-height:9px;color:#16a34a;letter-spacing:-0.189px">Checado</div>
<div class="t" id="r4g" style="left:315.60px;top:526.53px;font-size:9px;line-height:9px;color:#ea580c;letter-spacing:-0.013px">Parada Planejada</div>
<div class="t" id="r5t" style="left:88.63px;top:566.66px;font-size:10.5px;line-height:10.5px;color:#334155;letter-spacing:0.087px;clip-path:polygon(-20px -20px,2000px -20px,2000px 24.84px,-20px 24.84px)">Desbalanceamento</div>
<div class="t" id="r5d" style="left:87.70px;top:582.66px;font-size:10.5px;line-height:10.5px;color:#64748b;letter-spacing:-0.020px;clip-path:polygon(-20px -20px,2000px -20px,2000px 8.84px,-20px 8.84px)">18 de Dezembro de 2022 às 07:47</div>
<div class="t" id="r5n" style="left:378.50px;top:583.50px;font-size:8.5px;line-height:8.5px;color:#7a8699;letter-spacing:0.714px;clip-path:polygon(-20px -20px,2000px -20px,2000px 8.00px,-20px 8.00px)">#34</div>
<div class="t" id="rtitle" style="left:451.90px;top:147.70px;font-size:15px;line-height:15px;color:#1e293b;letter-spacing:0.112px;-webkit-text-stroke:0.3px #1e293b">Falta de Lubrificação</div>
<div class="t" id="pc" style="left:442.06px;top:200.66px;font-size:10.5px;line-height:10.5px;color:#5b6b82;letter-spacing:0.096px;-webkit-text-stroke:0.6px #5b6b82">Possíveis Causas:</div>
<div class="t" id="insp" style="left:754.62px;top:200.66px;font-size:10.5px;line-height:10.5px;color:#5b6b82;letter-spacing:0.310px;-webkit-text-stroke:0.6px #5b6b82">Inspecionar:</div>
<div class="t" id="lc0" style="left:451.82px;top:236.69px;font-size:11px;line-height:11px;color:#64748b;letter-spacing:-0.174px">Problemas de Lubrificação</div>
<div class="t" id="lc1" style="left:451.82px;top:260.69px;font-size:11px;line-height:11px;color:#64748b;letter-spacing:-0.272px">Nível de óleo baixo</div>
<div class="t" id="lc2" style="left:451.86px;top:284.69px;font-size:11px;line-height:11px;color:#64748b;letter-spacing:-0.183px">Desgaste do rolamento</div>
<div class="t" id="li0" style="left:769.52px;top:236.69px;font-size:11px;line-height:11px;color:#64748b;letter-spacing:-0.235px">Níveis de óleo</div>
<div class="t" id="li1" style="left:770.32px;top:260.69px;font-size:11px;line-height:11px;color:#64748b;letter-spacing:-0.236px">Qualidade do óleo</div>
<div class="t" id="li2" style="left:769.52px;top:284.69px;font-size:11px;line-height:11px;color:#64748b;letter-spacing:-0.198px">Rolamentos da máquina</div>
<div class="t" id="acel" style="left:430.50px;top:357.69px;font-size:11px;line-height:11px;color:#334155;letter-spacing:-0.316px;-webkit-text-stroke:0.6px #334155">Aceleração RMS</div>
<div class="t" id="alert" style="left:549.50px;top:357.74px;font-size:11px;line-height:11px;color:#ffffff;letter-spacing:-0.206px">Alerta por meio de IA</div>
<div class="t" id="lh" style="left:796.66px;top:358.66px;font-size:9.5px;line-height:9.5px;color:#475569;letter-spacing:-0.125px">Horizontal: <b>0.551 g</b></div>
<div class="t" id="la" style="left:903.70px;top:358.66px;font-size:9.5px;line-height:9.5px;color:#475569;letter-spacing:-0.224px">Axial: <b>0.901 g</b></div>
<div class="t" id="lv" style="left:988.00px;top:358.66px;font-size:9.5px;line-height:9.5px;color:#475569;letter-spacing:-0.153px">Vertical: <b>1.364 g</b></div>
<div class="t" id="ldate" style="left:939.47px;top:376.56px;font-size:9.5px;line-height:9.5px;color:#64748b;letter-spacing:-0.238px">15 de Maio de 2023 às 09:30</div>
<div class="t" id="y0" style="left:461.70px;top:408.51px;font-size:9.5px;line-height:9.5px;color:#64748b;letter-spacing:-0.194px">0.60</div>
<div class="t" id="y1" style="left:461.70px;top:433.51px;font-size:9.5px;line-height:9.5px;color:#64748b;letter-spacing:-0.192px">0.50</div>
<div class="t" id="y2" style="left:461.70px;top:456.66px;font-size:9.5px;line-height:9.5px;color:#64748b;letter-spacing:-0.122px">0.40</div>
<div class="t" id="y3" style="left:461.70px;top:481.66px;font-size:9.5px;line-height:9.5px;color:#64748b;letter-spacing:-0.127px">0.30</div>
<div class="t" id="y4" style="left:461.70px;top:505.51px;font-size:9.5px;line-height:9.5px;color:#64748b;letter-spacing:-0.179px">0.20</div>
<div class="t" id="y5" style="left:461.70px;top:529.61px;font-size:9.5px;line-height:9.5px;color:#64748b;letter-spacing:-0.192px">0.10</div>
<div class="t" id="y6" style="left:472.50px;top:556.51px;font-size:9.5px;line-height:9.5px;color:#64748b;letter-spacing:5.600px">0</div>
</body></html>
